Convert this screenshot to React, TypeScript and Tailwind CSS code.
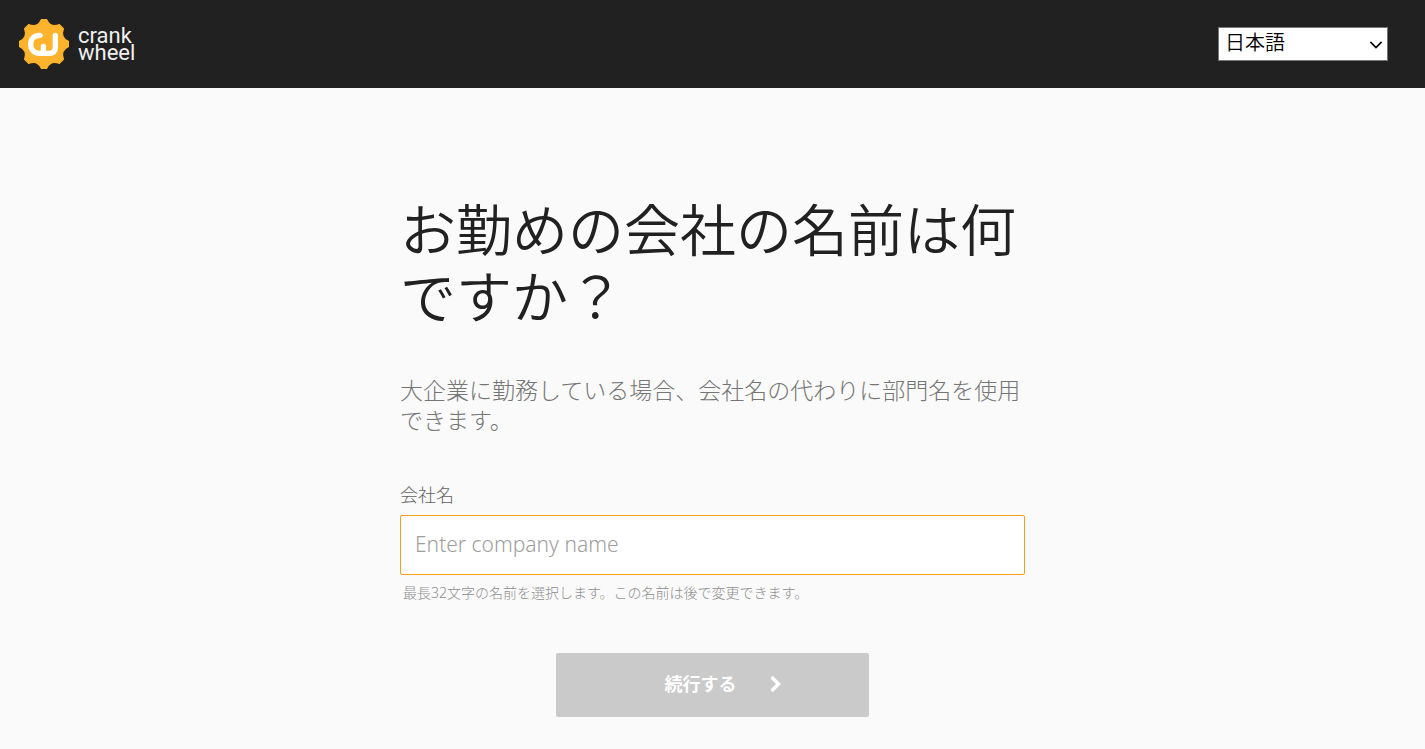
import { ChevronDown, ChevronRight } from "lucide-react"

const LANGUAGES = [
  { value: "ja", label: "日本語" },
  { value: "en", label: "English" },
]

function Logo() {
  return (
    <a href="#" className="flex items-center gap-[9px] text-[#f0f0f0]">
      <svg viewBox="0 0 150 150" className="size-[50px]" aria-hidden="true">
        <path
          fill="#fdb32b"
          stroke="#fdb32b"
          strokeWidth="4"
          strokeLinejoin="round"
          d="M67 2H83Q94 27 121 17L133 29Q123 56 148 67V83Q123 94 133 121L121 133Q94 123 83 148H67Q56 123 29 133L17 121Q27 94 2 83V67Q27 56 17 29L29 17Q56 27 67 2Z"
        />
        <path
          d="M63 49C44 49 35 60 35 76S46 103 62 103H90Q109 103 109 84V49M73 82V100"
          fill="none"
          stroke="#fff"
          strokeWidth="16"
          strokeLinecap="round"
          strokeLinejoin="round"
        />
      </svg>
      <span className="font-[Roboto,sans-serif] text-[22px] leading-[17px]">
        crank
        <br />
        wheel
      </span>
    </a>
  )
}

function Header() {
  return (
    <header className="flex h-[88px] items-center justify-between bg-[#212121] pr-[37px] pl-[19px]">
      <Logo />
      <div className="relative">
        <select
          aria-label="言語"
          defaultValue="ja"
          className="block h-[34px] w-[170px] appearance-none border border-[#767676] bg-white pr-6 pb-0.5 pl-1.5 text-[20px] leading-[28px] font-[350] text-black"
        >
          {LANGUAGES.map((lang) => (
            <option key={lang.value} value={lang.value}>
              {lang.label}
            </option>
          ))}
        </select>
        <ChevronDown
          className="pointer-events-none absolute top-2 right-0.5 size-5 text-black"
          strokeWidth={2}
          strokeLinecap="square"
          strokeLinejoin="miter"
          aria-hidden="true"
        />
      </div>
    </header>
  )
}

export default function App() {
  return (
    <div className="min-h-screen bg-[#fafafa] font-['Noto_Sans','Noto_Sans_CJK_JP',sans-serif] text-[#212121]">
      <Header />
      <main className="mx-auto max-w-[625px] pt-[108px] pb-8">
        <h1 className="text-[56px] leading-[67px] font-[350]">お勤めの会社の名前は何ですか？</h1>
        <p className="mt-[45px] text-[23px] leading-[30px] font-light text-[#757575]">
          大企業に勤務している場合、会社名の代わりに部門名を使用できます。
        </p>
        <form className="mt-[42px]" onSubmit={(e) => e.preventDefault()}>
          <label htmlFor="company" className="mb-0.5 block text-[18px] leading-[36px] font-light text-[#616161]">
            会社名
          </label>
          <input
            id="company"
            type="text"
            maxLength={32}
            placeholder="Enter company name"
            aria-describedby="company-hint"
            className="block h-[60px] w-full rounded-xs border border-[#f99d1c] bg-white px-3.5 pb-0.5 text-[21px] font-light outline-none placeholder:text-[#9e9e9e]"
          />
          <p id="company-hint" className="mt-2 pl-[3px] text-[14px] leading-[20px] font-light text-[#8e8e8e]">
            最長32文字の名前を選択します。この名前は後で変更できます。
          </p>
          <button
            type="submit"
            disabled
            className="mx-auto mt-[50px] flex h-[64px] w-1/2 items-center justify-center gap-6 rounded-xs bg-[#cacaca] pb-0.5 pl-7 text-[18px] font-bold text-white"
          >
            続行する
            <ChevronRight className="size-7" strokeWidth={3} strokeLinecap="butt" strokeLinejoin="miter" aria-hidden="true" />
          </button>
        </form>
      </main>
    </div>
  )
}
